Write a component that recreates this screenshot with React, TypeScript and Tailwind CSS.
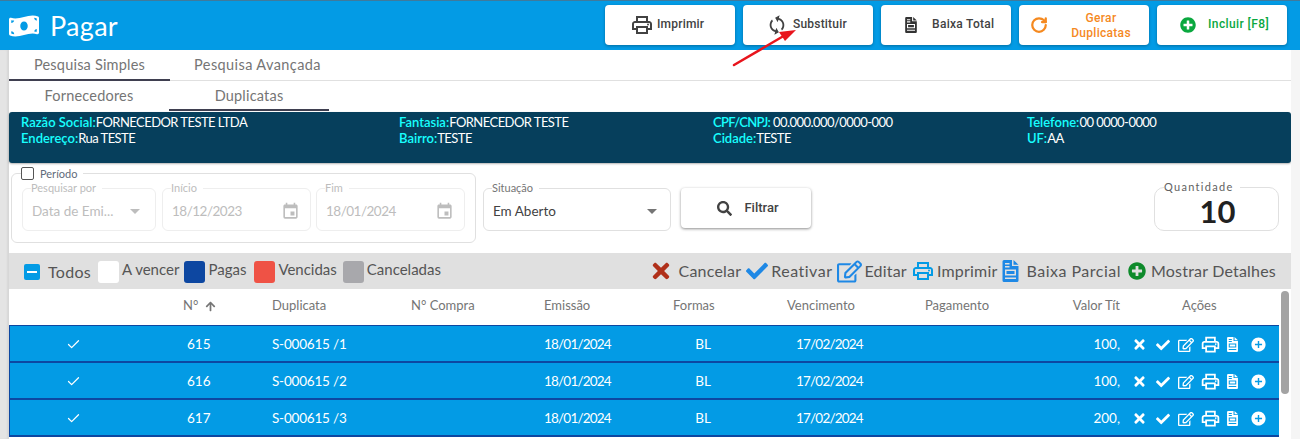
import React from "react";
import { FaMoneyBillWave, FaPlusCircle, FaSearch, FaTimes, FaCheck, FaRegEdit, FaArrowUp } from "react-icons/fa";
import { MdOutlinePrint, MdArrowDropDown, MdEvent, MdSync, MdAddCircle } from "react-icons/md";
import { LuCheck, LuRotateCw } from "react-icons/lu";

function DocIcon({ w, h, className = "" }: { w: number; h: number; className?: string }) {
  return (
    <svg width={w} height={h} viewBox="0 0 16 22" className={className} fill="currentColor">
      <path
        fillRule="evenodd"
        d="M0 1.5A1.5 1.5 0 0 1 1.5 0H9.5V6H16V20.5A1.5 1.5 0 0 1 14.5 22H1.5A1.5 1.5 0 0 1 0 20.5ZM2.5 3V4.5H7V3ZM2.5 6V7.5H7V6ZM2.5 9.5V15.5H13.5V9.5ZM4 11H12V14H4ZM2.5 17.5V19H13.5V17.5Z"
      />
      <path d="M11 0L16 4.8H11Z" />
    </svg>
  );
}

function TopBtn({ icon, children, cls = "text-[#424242]" }: { icon: React.ReactNode; children: React.ReactNode; cls?: string }) {
  return (
    <button className={`w-[130px] h-[40px] bg-white rounded-[4px] shadow-[0_1px_3px_rgba(0,0,0,0.3)] flex items-center justify-start [font-family:Roboto,sans-serif] text-[12px] font-medium tracking-[0.2px] leading-[15px] ${cls}`}>
      {icon}
      {children}
    </button>
  );
}

function Field({ label, className, disabled, children }: { label: string; className: string; disabled?: boolean; children: React.ReactNode }) {
  return (
    <fieldset className={`border rounded-[6px] ${disabled ? "border-[#eeeeee]" : "border-[#e0e0e0]"} ${className}`}>
      <legend className={`ml-[8px] pr-[6px] text-[11px] leading-[14px] ${disabled ? "text-[#bdbdbd]" : "text-[#757575]"}`}>{label}</legend>
      {children}
    </fieldset>
  );
}

function Swatch({ color, label, className }: { color: string; label: string; className: string }) {
  return (
    <div className={`flex items-center gap-[3px] ${className}`}>
      <span className={`w-[21px] h-[22px] rounded-[3px] mt-[1px] ${color}`} />
      <span className="text-[15px] text-[#555555] -mt-[3px]">{label}</span>
    </div>
  );
}

const headCols = "grid w-[1270px] grid-cols-[128px_135px_139px_133px_129px_114px_138px_95px_100px_159px] items-center";
const rowCols = "grid w-[1270px] grid-cols-[127px_135px_139px_133px_129px_114px_138px_95px_100px_159px] items-center";
const rows = [
  ["615", "S-000615 /1", "100,"],
  ["616", "S-000615 /2", "100,"],
  ["617", "S-000615 /3", "200,"],
];

const label = "text-[#18ffff] font-semibold";
const value = "tracking-[-0.55px]";

export default function App() {
  return (
    <div className="w-[1300px] h-[439px] overflow-hidden bg-white [font-family:Lato,sans-serif] relative">
      <header className="h-[50px] bg-[#039be5] border-t border-[#3f7a9c] flex items-center justify-between pl-[9px] pr-[13px]">
        <div className="flex items-center gap-[11px] text-white">
          <FaMoneyBillWave size={30} />
          <span className="text-[27px] leading-none tracking-[0.3px]">Pagar</span>
        </div>
        <div className="flex gap-[8px] -mt-[2px]">
          <TopBtn icon={<MdOutlinePrint size={24} className="ml-[25px]" />}><span className="ml-[3px]">Imprimir</span></TopBtn>
          <TopBtn icon={<MdSync size={22} className="ml-[23px] rotate-[15deg]" />}><span className="ml-[5px]">Substituir</span></TopBtn>
          <TopBtn icon={<DocIcon w={12} h={16} className="ml-[24px] text-[#333333]" />}><span className="ml-[15px] tracking-[0.3px]">Baixa Total</span></TopBtn>
          <TopBtn icon={<LuRotateCw size={18} strokeWidth={3} className="ml-[11px] text-[#f5891f]" />} cls="text-[#f5891f]"><span className="w-[84px] ml-[11px] text-center tracking-[0.3px] pt-[2px]">Gerar Duplicatas</span></TopBtn>
          <TopBtn icon={<FaPlusCircle size={16} className="ml-[23px]" />} cls="text-[#0aa83f]"><span className="ml-[12px] tracking-[0.4px]">Incluir [F8]</span></TopBtn>
        </div>
      </header>

      <div className="flex h-[389px]">
        <div className="w-[9px] bg-[#e4e4e4] shadow-[inset_-2px_0_2px_rgba(0,0,0,0.06)]" />
        <main className="w-[1282px] flex flex-col">
          <div className="flex h-[31px] border-b border-[#e0e0e0] text-[14.5px] text-[#757575] tracking-[0.2px]">
            <div className="w-[161px] h-[31px] border-b-[2px] border-[#3f3f50] flex items-center justify-center">Pesquisa Simples</div>
            <div className="w-[161px] flex items-center justify-center pl-[14px] tracking-[0.4px]">Pesquisa Avançada</div>
          </div>
          <div className="flex h-[30px] text-[14.5px] text-[#757575] tracking-[0.2px]">
            <div className="w-[160px] flex items-center justify-center">Fornecedores</div>
            <div className="w-[160px] border-b-[2px] border-[#3f3f50] flex items-center justify-center pt-[2px]">Duplicatas</div>
          </div>
          <section className="h-[51px] mt-[1px] bg-[#063f5c] rounded-[3px] grid grid-cols-[378px_314px_314px_1fr] pl-[12px] pt-[2px] text-[13px] leading-[16px] text-white content-start shadow-[0_1px_2px_rgba(0,0,0,0.3)]">
            <div><b className={label}>Razão Social:</b><span className={value}>FORNECEDOR TESTE LTDA</span></div>
            <div><b className={label}>Fantasia:</b><span className={value}>FORNECEDOR TESTE</span></div>
            <div><b className={`${label} tracking-[-0.7px]`}>CPF/CNPJ:</b><span className={value}> 00.000.000/0000-000</span></div>
            <div><b className={label}>Telefone:</b><span className={value}>00 0000-0000</span></div>
            <div><b className={label}>Endereço:</b><span className={value}>Rua TESTE</span></div>
            <div><b className={label}>Bairro:</b><span className={value}>TESTE</span></div>
            <div><b className={label}>Cidade:</b><span className={value}>TESTE</span></div>
            <div><b className={label}>UF:</b><span className={value}>AA</span></div>
          </section>

          <div className="h-[90px] flex items-start pl-[2px]">
            <fieldset className="w-[465px] h-[76px] mt-[4px] border border-[#e0e0e0] rounded-[6px] px-[10px]">
              <legend className="-ml-[1px] pr-[6px] flex items-center gap-[6px] text-[11px] leading-[12px] text-[#5f6b7a]">
                <span className="w-[13px] h-[13px] border border-[#555555] rounded-[2px] bg-white" />
                Período
              </legend>
              <div className="flex mt-[1px]">
                <Field label="Pesquisar por" disabled className="w-[134px] h-[50px] shrink-0">
                  <div className="flex items-center justify-between pl-[9px] pr-[8px] h-[32px] text-[13.5px] text-[#bdbdbd]">
                    Data de Emi...
                    <MdArrowDropDown size={24} className="text-[#bdbdbd]" />
                  </div>
                </Field>
                <Field label="Início" disabled className="w-[149px] h-[50px] shrink-0 ml-[6px]">
                  <div className="flex items-center justify-between pl-[9px] pr-[10px] h-[32px] text-[13.5px] tracking-[-0.5px] text-[#bdbdbd]">
                    18/12/2023
                    <MdEvent size={19} className="text-[#bdbdbd]" />
                  </div>
                </Field>
                <Field label="Fim" disabled className="w-[149px] h-[50px] shrink-0 ml-[5px]">
                  <div className="flex items-center justify-between pl-[9px] pr-[10px] h-[32px] text-[13.5px] tracking-[-0.5px] text-[#bdbdbd]">
                    18/01/2024
                    <MdEvent size={19} className="text-[#bdbdbd]" />
                  </div>
                </Field>
              </div>
            </fieldset>
            <Field label="Situação" className="w-[188px] h-[50px] mt-[18px] ml-[7px]">
              <div className="flex items-center justify-between pl-[9px] pr-[6px] h-[32px] text-[13.5px] text-[#424242]">
                Em Aberto
                <MdArrowDropDown size={24} className="text-[#757575]" />
              </div>
            </Field>
            <button className="w-[130px] h-[40px] mt-[25px] ml-[10px] bg-white rounded-[4px] shadow-[0_1px_3px_rgba(0,0,0,0.45)] flex items-center justify-center gap-[12px] pl-[4px] [font-family:Roboto,sans-serif] text-[13px] font-medium text-[#424242]">
              <FaSearch size={15} /> Filtrar
            </button>
            <fieldset className="w-[125px] h-[51px] mt-[17px] ml-[343px] border border-[#e0e0e0] rounded-[10px]">
              <legend className="ml-[9px] pr-[6px] text-[11px] leading-[14px] tracking-[1.3px] text-[#616161]">Quantidade</legend>
              <div className="mt-[4px] text-center text-[31px] leading-[26px] font-bold text-[#212121] pl-[2px]">10</div>
            </fieldset>
          </div>

          <div className="h-[36px] bg-[#e0e0e0] flex items-center pl-[15px] pr-[15px] justify-between text-[#555555]">
            <div className="flex items-center">
              <div className="flex items-center gap-[8px]">
                <span className="w-[16px] h-[16px] rounded-[2px] bg-[#039be5] flex items-center justify-center mt-[1px]"><span className="w-[10px] h-[2px] bg-white" /></span>
                <span className="text-[16px] mt-[2px] tracking-[0.3px]">Todos</span>
              </div>
              <Swatch color="bg-white" label="A vencer" className="ml-[7px]" />
              <Swatch color="bg-[#0d47a1]" label="Pagas" className="ml-[5px]" />
              <Swatch color="bg-[#ef5245]" label="Vencidas" className="ml-[8px]" />
              <Swatch color="bg-[#a8a8ac]" label="Canceladas" className="ml-[6px]" />
            </div>
            <div className="flex items-center text-[16px] tracking-[0.2px]">
              <FaTimes size={24} className="text-[#b0301a] mr-[6px]" />Cancelar
              <FaCheck size={22} className="text-[#1e88e5] ml-[5px] mr-[3px]" /><span className="tracking-[0.5px]">Reativar</span>
              <FaRegEdit size={25} className="text-[#1e88e5] ml-[5px] mr-[2px]" />Editar
              <MdOutlinePrint size={24} className="text-[#039be5] ml-[4px] mr-[2px]" />Imprimir
              <DocIcon w={17} h={22} className="text-[#1e88e5] ml-[5px] mr-[7px]" /><span className="tracking-[0.5px]">Baixa Parcial</span>
              <FaPlusCircle size={18} className="text-[#0e8a2b] ml-[7px] mr-[5px]" />Mostrar Detalhes
            </div>
          </div>

          <div className="relative flex-1">
            <div className={`${headCols} h-[36px] text-[13px] text-[#757575] pb-[2px]`}>
              <span />
              <span className="pl-[46px] flex items-center gap-[7px]">N° <FaArrowUp size={11} /></span>
              <span>Duplicata</span>
              <span>N° Compra</span>
              <span>Emissão</span>
              <span>Formas</span>
              <span>Vencimento</span>
              <span>Pagamento</span>
              <span className="text-right">Valor Tít</span>
              <span className="pl-[62px]">Ações</span>
            </div>
            <div className="w-[1270px] border-t border-[#0d47a1]">
              {rows.map((r) => (
                <div key={r[0]} className={`${rowCols} h-[37px] pt-[2px] bg-[#039be5] border-l border-b-[2px] border-[#0d47a1] text-[13.5px] text-white`}>
                  <span className="flex justify-center"><LuCheck size={15} /></span>
                  <span className="pl-[50px]">{r[0]}</span>
                  <span className="tracking-[-0.2px]">{r[1]}</span>
                  <span />
                  <span className="tracking-[-0.8px]">18/01/2024</span>
                  <span className="w-[60px] text-center">BL</span>
                  <span className="pl-[9px] tracking-[-0.8px]">17/02/2024</span>
                  <span />
                  <span className="text-right">{r[2]}</span>
                  <span className="flex items-center pl-[12px]">
                    <FaTimes size={15} className="mr-[9px]" />
                    <FaCheck size={14} className="mr-[8px]" />
                    <FaRegEdit size={16} className="mr-[6px]" />
                    <MdOutlinePrint size={21} className="mr-[6px]" />
                    <DocIcon w={11} h={15} className="mr-[12px]" />
                    <MdAddCircle size={17} />
                  </span>
                </div>
              ))}
            </div>
            <div className="absolute right-[2px] top-[2px] w-[8px] h-[103px] rounded-full bg-[#a3a3a3]" />
          </div>
        </main>
        <div className="w-[9px] bg-[#f5f5f5]" />
      </div>

      <svg className="absolute left-[725px] top-[25px]" width="80" height="45" viewBox="0 0 80 45">
        <line x1="9" y1="40" x2="62" y2="9" stroke="#e8141c" strokeWidth="2.5" strokeLinecap="round" />
        <polygon points="71,5 54,7 60,16" fill="#e8141c" />
      </svg>
    </div>
  );
}
